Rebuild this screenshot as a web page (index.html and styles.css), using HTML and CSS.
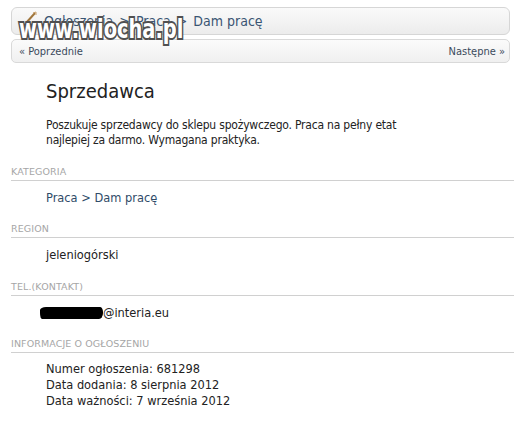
FILE: index.html
```html
<!DOCTYPE html>
<html lang="pl">
<head>
<meta charset="utf-8">
<link rel="stylesheet" href="styles.css">
</head>
<body>
<div class="page">
  <div class="crumbs">
    <span class="home-icon"><svg width="14" height="14" viewBox="0 0 14 14"><path d="M2 12 L11 2" stroke="#a0763c" stroke-width="2" fill="none"/><path d="M9 2 L12 1 L12 4" stroke="#c9a06a" stroke-width="1" fill="none"/></svg></span>
    <span class="crumb">Ogłoszenia</span><span class="sep">&gt;</span><span class="crumb">Praca</span><span class="sep">&gt;</span><span class="crumb">Dam pracę</span>
    <span class="watermark">www.wiocha.pl</span>
  </div>
  <div class="pager">
    <span class="prev">« Poprzednie</span>
    <span class="next">Następne »</span>
  </div>
  <div class="ad">
    <h1 class="title">Sprzedawca</h1>
    <p class="desc">Poszukuje sprzedawcy do sklepu spożywczego. Praca na pełny etat<br>najlepiej za darmo. Wymagana praktyka.</p>
  </div>
  <div class="section">
    <div class="label">KATEGORIA</div>
    <div class="value link">Praca &gt; Dam pracę</div>
  </div>
  <div class="section">
    <div class="label">REGION</div>
    <div class="value">jeleniogórski</div>
  </div>
  <div class="section">
    <div class="label">TEL.(KONTAKT)</div>
    <div class="value"><span class="redact"></span>@interia.eu</div>
  </div>
  <div class="section">
    <div class="label">INFORMACJE O OGŁOSZENIU</div>
    <div class="value lines">Numer ogłoszenia: 681298<br>Data dodania: 8 sierpnia 2012<br>Data ważności: 7 września 2012</div>
  </div>
</div>
</body>
</html>
```
FILE: styles.css
```css
html, body {
  margin: 0;
  padding: 0;
  background: #fff;
}
body {
  font-family: "DejaVu Sans Condensed", "DejaVu Sans", sans-serif;
  color: #222;
  width: 514px;
  overflow: hidden;
}
.page {
  padding-top: 7px;
}
.crumbs {
  position: relative;
  margin: 0 4px 0 11px;
  height: 26px;
  border: 1px solid #d6d6d6;
  border-radius: 6px;
  background: linear-gradient(#fafafa, #ececec);
  display: flex;
  align-items: center;
  padding-left: 12px;
  font-size: 14px;
  color: #3a5573;
}
.home-icon {
  display: flex;
  margin-right: 6px;
  margin-top: -6px;
}
.sep {
  margin: 0 6px;
}
.watermark {
  position: absolute;
  left: 7px;
  top: 6px;
  font-family: "DejaVu Sans", sans-serif;
  font-weight: bold;
  font-size: 27px;
  line-height: 30px;
  white-space: nowrap;
  color: #fff;
  -webkit-text-stroke: 4px #505050;
  paint-order: stroke fill;
  transform: scaleX(0.72);
  transform-origin: left top;
}
.pager {
  margin: 4px 4px 0 11px;
  height: 22px;
  border: 1px solid #d9d9d9;
  border-radius: 5px;
  background: linear-gradient(#fbfbfb, #f0f0f0);
  display: flex;
  justify-content: space-between;
  align-items: center;
  padding: 0 4px 0 7px;
  font-size: 11px;
  color: #3b4a5c;
}
.ad {
  padding-left: 46px;
}
.title {
  margin: 16px 0 0 0;
  font-size: 20px;
  font-weight: normal;
  line-height: 24px;
  color: #222;
}
.desc {
  margin: 15px 0 0 0;
  font-size: 12px;
  line-height: 15px;
  letter-spacing: -0.2px;
  color: #222;
}
.section {
  margin-left: 11px;
}
.label {
  font-family: "DejaVu Sans", sans-serif;
  font-size: 9.5px;
  letter-spacing: 0.1px;
  color: #a6a6a6;
  line-height: 12px;
  padding-bottom: 2px;
  border-bottom: 1px solid #d0d0d0;
  margin-top: 17.5px;
}
.value {
  padding-left: 35px;
  font-size: 12.7px;
  line-height: 16px;
  margin-top: 9px;
}
.link {
  color: #2f4b68;
}
.redact {
  display: inline-block;
  width: 63px;
  height: 12px;
  margin-left: -6px;
  background: #000;
  border-radius: 6px 3px 4px 2px / 3px 5px 6px 6px;
  vertical-align: -2px;
}
.lines {
  line-height: 16px;
  margin-top: 8px;
}
```
